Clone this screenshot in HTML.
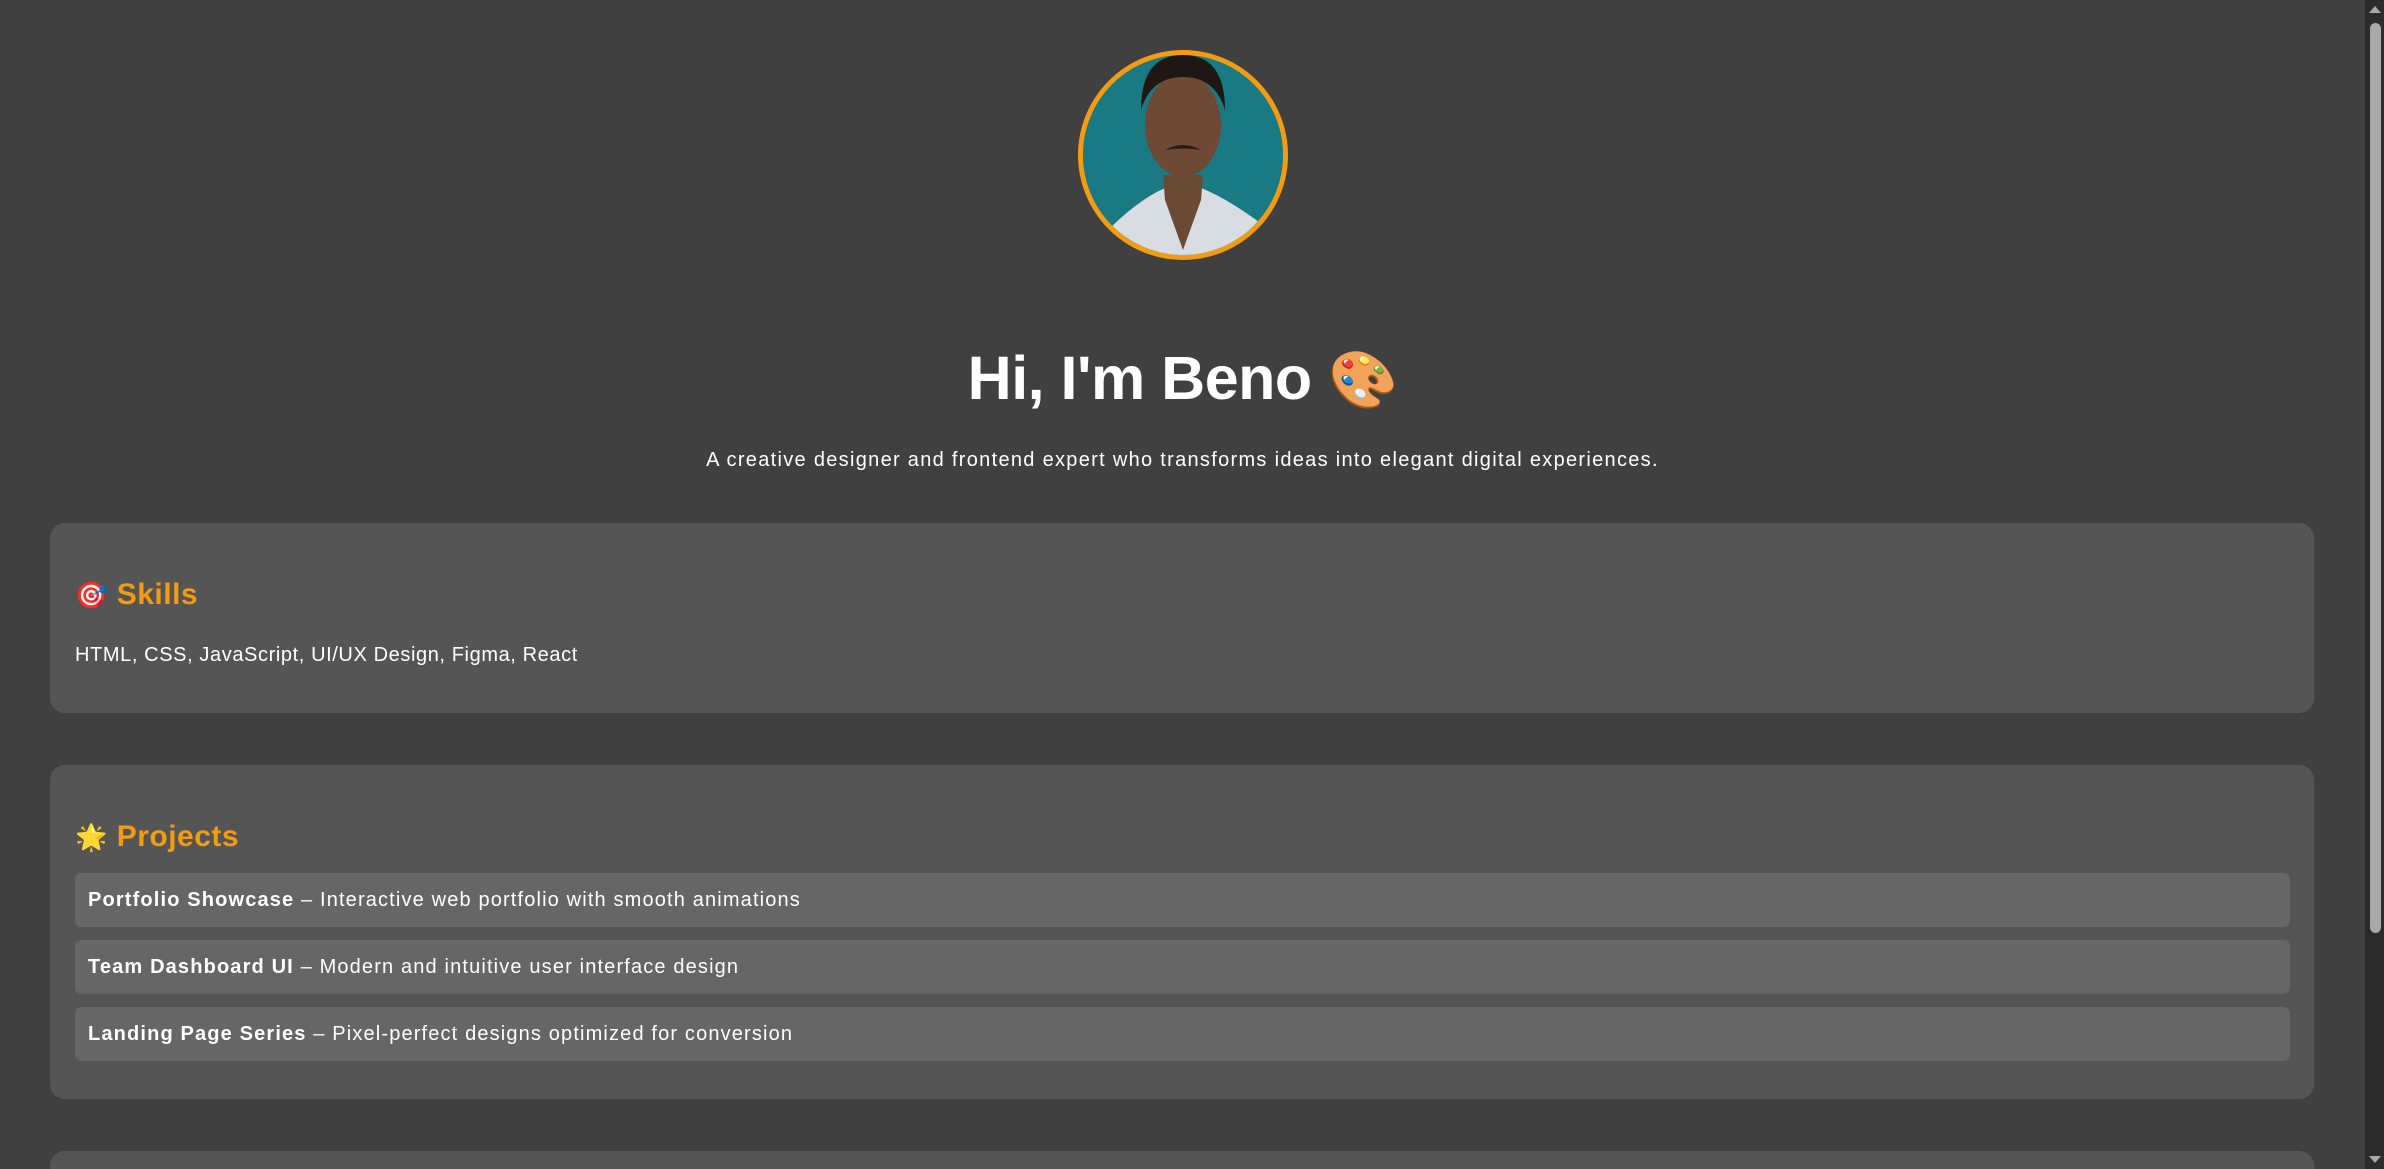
<!DOCTYPE html>
<html><head><meta charset="utf-8"><style>
html,body{margin:0;padding:0;overflow:hidden;height:1169px}
body{width:2384px;height:1169px;overflow:hidden;background:#404040;font-family:"Liberation Sans",sans-serif;color:#fff;position:relative}
.av{position:absolute;left:1078px;top:50px;width:200px;height:200px;border:5px solid #f39c12;border-radius:50%;overflow:hidden;background:#1a7a84}
h1{position:absolute;left:0;width:2365px;top:343px;margin:0;text-align:center;font-size:61px;font-weight:bold;letter-spacing:-0.5px}
.sub{position:absolute;left:0;width:2365px;top:449px;text-align:center;font-size:20px;letter-spacing:1.3px}
.card{position:absolute;left:50px;width:2264px;background:#555;border-radius:15px}
.h{position:absolute;left:75px;font-size:30px;font-weight:bold;color:#f39c12;letter-spacing:0.5px}
.t{position:absolute;left:75px;font-size:20px;letter-spacing:0.6px}
.it{position:absolute;left:75px;width:2215px;height:54px;background:#666;border-radius:6px;font-size:20px;line-height:54px;text-indent:13px;letter-spacing:1.15px}
.sb{position:absolute;right:0;top:0;width:19px;height:1169px;background:#2c2c2c}
</style></head><body>
<div class="av"><svg width="200" height="200" viewBox="0 0 200 200">
<rect width="200" height="200" fill="#1a7a84"/>
<path d="M25 175 Q60 140 90 130 L110 130 Q140 140 180 170 L200 200 L0 200Z" fill="#d8dde2"/>
<path d="M80 120 L120 120 L118 145 L100 195 L82 145Z" fill="#6b4a35"/>
<ellipse cx="100" cy="70" rx="38" ry="52" fill="#6e4a36"/>
<path d="M58 55 Q58 0 100 0 Q142 0 142 55 Q132 22 100 22 Q68 22 58 55Z" fill="#1e1714"/>
<path d="M82 95 Q100 85 118 95 Q100 92 82 95Z" fill="#2a1c16"/>
</svg></div>
<h1>Hi, I'm Beno <span style="font-size:56px">🎨</span></h1>
<div class="sub">A creative designer and frontend expert who transforms ideas into elegant digital experiences.</div>
<div class="card" style="top:523px;height:190px"></div>
<div class="h" style="top:578px"><span style="font-size:26px">🎯</span> Skills</div>
<div class="t" style="top:644px">HTML, CSS, JavaScript, UI/UX Design, Figma, React</div>
<div class="card" style="top:765px;height:334px"></div>
<div class="h" style="top:820px"><span style="font-size:26px">🌟</span> Projects</div>
<div class="it" style="top:873px"><b>Portfolio Showcase</b> – Interactive web portfolio with smooth animations</div>
<div class="it" style="top:940px"><b>Team Dashboard UI</b> – Modern and intuitive user interface design</div>
<div class="it" style="top:1007px"><b>Landing Page Series</b> – Pixel-perfect designs optimized for conversion</div>
<div class="card" style="top:1151px;height:18px;border-radius:15px 15px 0 0"></div>
<div class="sb"><div style="position:absolute;left:5px;top:23px;width:11px;height:910px;background:#a8a8a8;border-radius:6px"></div>
<div style="position:absolute;left:4px;top:6px;width:0;height:0;border-left:6px solid transparent;border-right:6px solid transparent;border-bottom:7px solid #a8a8a8"></div>
<div style="position:absolute;left:4px;bottom:6px;width:0;height:0;border-left:6px solid transparent;border-right:6px solid transparent;border-top:7px solid #a8a8a8"></div></div>
</body></html>
